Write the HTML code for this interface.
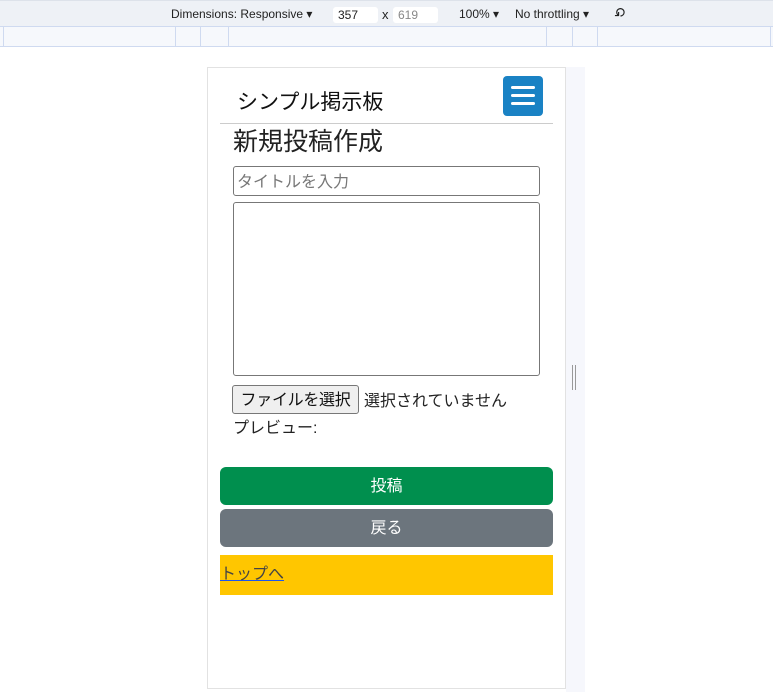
<!DOCTYPE html>
<html><head><meta charset="utf-8"><style>
*{box-sizing:border-box;margin:0;padding:0}
body{width:773px;height:692px;overflow:hidden;background:#fff;position:relative;font-family:"Liberation Sans","Noto Sans CJK JP",sans-serif;color:#212529}
.tb{position:absolute;left:0;top:0;width:773px;height:27px;background:#eef1f6;border-top:1px solid #dde2ea;border-bottom:1px solid #cfdaf0;font-size:12px;color:#222}
.tb span{position:absolute;top:6px}
.inp{position:absolute;top:6px;height:16px;background:#fff;border-radius:3px;font-size:12px;padding:1px 5px}
.rl{position:absolute;left:0;top:27px;width:773px;height:20px;background:#f6f8fc;border-bottom:1px solid #cfdaf0}
.rl i{position:absolute;top:0;width:1px;height:20px;background:#cfdaf0}
.a{position:absolute;white-space:nowrap}
.ph{position:absolute;left:207px;top:67px;width:359px;height:622px;background:#fff;border:1px solid #e2e2e2}
</style></head><body>
<div class="tb">
<span style="left:171px">Dimensions: Responsive ▾</span>
<div class="inp" style="left:333px;width:45px">357</div>
<span style="left:382px;font-size:13px">x</span>
<div class="inp" style="left:393px;width:45px;color:#888">619</div>
<span style="left:459px">100% ▾</span>
<span style="left:515px">No throttling ▾</span>
<span style="left:614px;font-size:14px;top:4px;transform:rotate(-45deg)">⟲</span>
</div>
<div class="rl"><i style="left:3px"></i><i style="left:175px"></i><i style="left:200px"></i><i style="left:228px"></i><i style="left:546px"></i><i style="left:572px"></i><i style="left:597px"></i><i style="left:770px"></i></div>
<div class="a" style="left:566px;top:67px;width:19px;height:625px;background:#f6f7fc"></div>
<div class="a" style="left:572px;top:365px;height:25px;border-left:1px solid #999;border-right:1px solid #999;width:4px"></div>
<div class="ph"></div>
<div class="a" style="left:237px;top:86px;font-size:21px;color:#111">シンプル掲示板</div>
<div class="a" style="left:503px;top:76px;width:40px;height:40px;background:#1a82c4;border-radius:4px">
<div style="position:absolute;left:8px;top:10px;width:24px;height:3px;background:#fff;border-radius:2px"></div>
<div style="position:absolute;left:8px;top:18px;width:24px;height:3px;background:#fff;border-radius:2px"></div>
<div style="position:absolute;left:8px;top:26px;width:24px;height:3px;background:#fff;border-radius:2px"></div>
</div>
<div class="a" style="left:220px;top:123px;width:333px;height:1px;background:#ccc"></div>
<div class="a" style="left:233px;top:122px;font-size:25px;color:#222">新規投稿作成</div>
<div class="a" style="left:233px;top:166px;width:307px;height:30px;border:1px solid #777;border-radius:3px;font-size:16px;color:#777;padding:0 3px;line-height:31px">タイトルを入力</div>
<div class="a" style="left:233px;top:202px;width:307px;height:174px;border:1px solid #777;border-radius:3px"></div>
<div class="a" style="left:232px;top:385px;width:127px;height:29px;border:1px solid #777;border-radius:3px;background:#efefef;font-size:16px;padding:0;text-align:center;line-height:29px;color:#111;letter-spacing:-0.3px;overflow:hidden">ファイルを選択</div>
<div class="a" style="left:364px;top:387px;font-size:16px;color:#222">選択されていません</div>
<div class="a" style="left:233px;top:414px;font-size:16px;color:#222">プレビュー:</div>
<div class="a" style="left:220px;top:467px;width:333px;height:38px;background:#008f4e;border-radius:6px;color:#fff;font-size:16px;text-align:center;line-height:40px">投稿</div>
<div class="a" style="left:220px;top:509px;width:333px;height:38px;background:#6c757d;border-radius:6px;color:#fff;font-size:16px;text-align:center;line-height:40px">戻る</div>
<div class="a" style="left:220px;top:555px;width:333px;height:40px;background:#ffc600"></div>
<div class="a" style="left:220px;top:566px;font-size:16px;color:#444;text-decoration:underline;text-decoration-color:#1a56f0;line-height:18px">トップへ</div>
</body></html>
